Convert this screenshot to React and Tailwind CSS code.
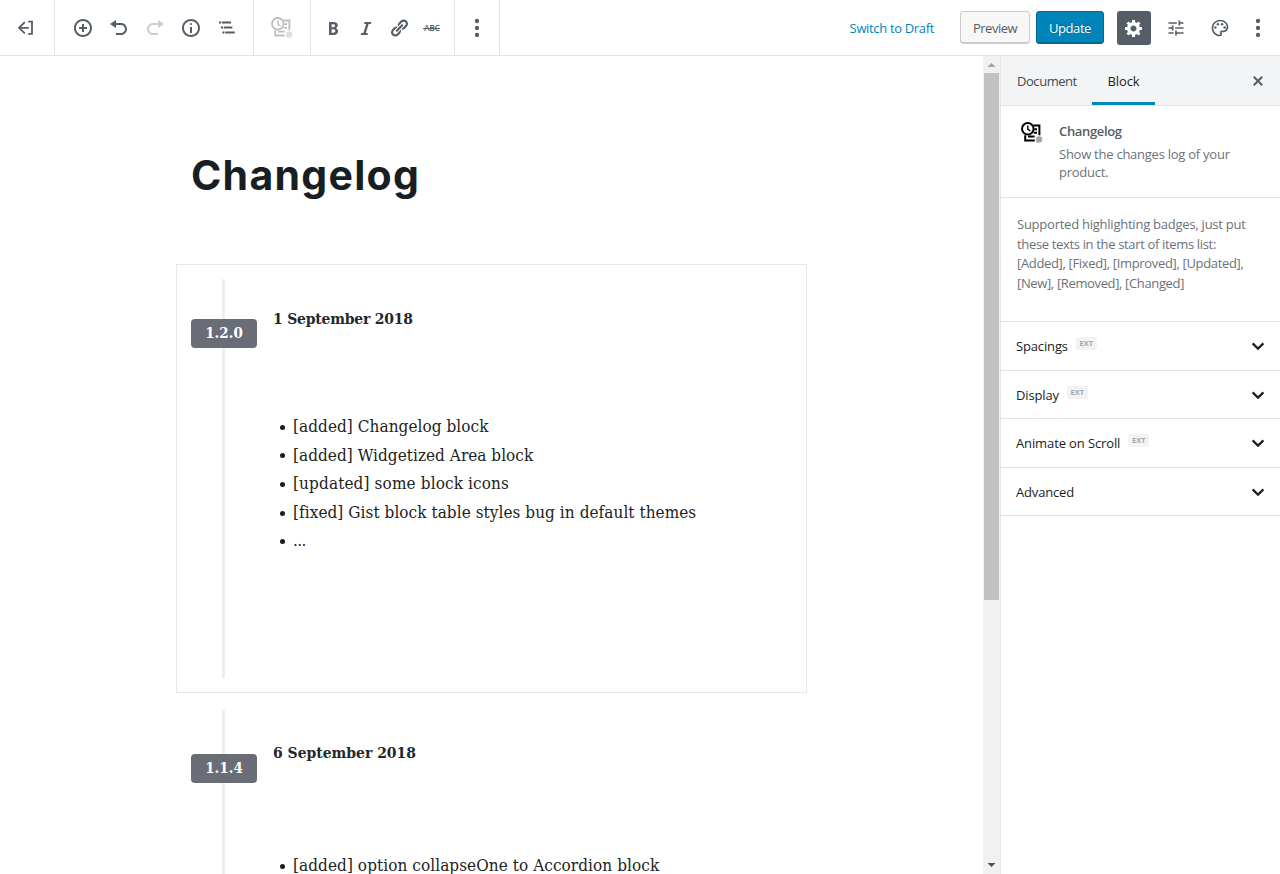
import React from "react";
import { MdOutlinePalette } from "react-icons/md";

const PATHS = {
  insert: "M10 1c-5 0-9 4-9 9s4 9 9 9 9-4 9-9-4-9-9-9zm0 16c-3.9 0-7-3.1-7-7s3.1-7 7-7 7 3.1 7 7-3.1 7-7 7zm1-11H9v3H6v2h3v3h2v-3h3V9h-3V6z",
  undo: "M12 5H7V2L1 6l6 4V7h5c2.2 0 4 1.8 4 4s-1.8 4-4 4H7v2h5c3.3 0 6-2.7 6-6s-2.7-6-6-6z",
  redo: "M8 5h5V2l6 4-6 4V7H8c-2.2 0-4 1.8-4 4s1.8 4 4 4h5v2H8c-3.3 0-6-2.7-6-6s2.7-6 6-6z",
  info: "M9 15h2V9H9v6zm1-10c-.5 0-1 .5-1 1s.5 1 1 1 1-.5 1-1-.5-1-1-1zm0-4c-5 0-9 4-9 9s4 9 9 9 9-4 9-9-4-9-9-9zm0 16c-3.9 0-7-3.1-7-7s3.1-7 7-7 7 3.1 7 7-3.1 7-7 7z",
  outline: "M2 3.6h2v2H2zM4.8 3.6H14v2H4.8zM4 8.6h2v2H4zM6.8 8.6H15.4v2H6.8zM5.4 13.6h2v2h-2zM8.2 13.6H17.8v2H8.2z",
  bold: "M6 4v13h4.54c1.37 0 2.46-.33 3.26-1 .8-.66 1.2-1.58 1.2-2.77 0-.84-.17-1.51-.51-2.01s-.9-.85-1.67-1.03v-.09c.57-.1 1.02-.4 1.36-.9s.51-1.13.51-1.91c0-1.14-.39-1.98-1.17-2.5C12.75 4.26 11.5 4 9.78 4H6zm2.57 5.15V6.26h1.36c.73 0 1.27.11 1.61.32.34.22.51.58.51 1.07 0 .54-.16.92-.47 1.15s-.82.35-1.51.35h-1.5zm0 2.19h1.6c1.44 0 2.16.53 2.16 1.61 0 .6-.17 1.05-.51 1.34s-.86.43-1.57.43H8.57v-3.38z",
  italic: "M14.78 6h-2.13l-2.8 9h2.12l-.62 2H4.6l.62-2h2.14l2.8-9H8.03l.62-2h6.75z",
  link: "M17.74 2.76c1.68 1.69 1.68 4.41 0 6.1l-1.53 1.52c-1.12 1.12-2.7 1.47-4.14 1.09l2.62-2.61.76-.77.76-.76c.84-.84.84-2.2 0-3.04-.84-.85-2.2-.85-3.04 0l-.77.76-3.38 3.38c-.37-1.44-.02-3.02 1.1-4.14l1.52-1.53c1.69-1.68 4.42-1.68 6.1 0zM8.59 13.43l5.34-5.34c.42-.42.42-1.1 0-1.52-.44-.43-1.13-.39-1.53 0l-5.33 5.34c-.42.42-.42 1.1 0 1.52.44.43 1.13.39 1.52 0zm-.76 2.29l4.14-4.15c.38 1.44.03 3.02-1.09 4.14l-1.52 1.53c-1.69 1.68-4.41 1.68-6.1 0-1.68-1.68-1.68-4.42 0-6.1l1.53-1.52c1.12-1.12 2.7-1.47 4.14-1.1l-4.14 4.15c-.85.84-.85 2.2 0 3.05.84.84 2.2.84 3.04 0z",
  gear: "M18 12h-2.18c-.17.7-.44 1.35-.81 1.93l1.54 1.54-2.1 2.1-1.54-1.54c-.58.36-1.23.63-1.91.79V19H8v-2.18c-.68-.16-1.33-.43-1.91-.79l-1.54 1.54-2.12-2.12 1.54-1.54c-.36-.58-.63-1.23-.79-1.91H1V9.03h2.17c.16-.7.44-1.35.8-1.94L2.43 5.55l2.1-2.1 1.54 1.54c.58-.37 1.24-.64 1.93-.81V2h3v2.18c.68.16 1.33.43 1.91.79l1.54-1.54 2.12 2.12-1.54 1.54c.36.59.64 1.24.8 1.94H18V12zm-8.5 1.5c1.66 0 3-1.34 3-3s-1.34-3-3-3-3 1.34-3 3 1.34 3 3 3z",
  tune: "M3 17v2h6v-2H3zM3 5v2h10V5H3zm10 16v-2h8v-2h-8v-2h-2v6h2zM7 9v2H3v2h4v2h2V9H7zm14 4v-2H11v2h10zm-6-4h2V7h4V5h-4V3h-2v6z",
  close: "M14.95 6.46L11.41 10l3.54 3.54-1.41 1.41L10 11.42l-3.53 3.53-1.42-1.42L8.58 10 5.05 6.47l1.42-1.42L10 8.58l3.54-3.53z",
};

function Icon({ name, size = 20, box = 20, className = "" }) {
  return (
    <svg width={size} height={size} viewBox={`0 0 ${box} ${box}`} fill="currentColor" className={`shrink-0 ${className}`}>
      <path d={PATHS[name]} />
    </svg>
  );
}

function Dots() {
  return (
    <svg width="6" height="20" viewBox="0 0 6 20" fill="currentColor" className="shrink-0">
      <circle cx="3" cy="3" r="2.15" />
      <circle cx="3" cy="10" r="2.15" />
      <circle cx="3" cy="17" r="2.15" />
    </svg>
  );
}

function ExitIcon() {
  return (
    <svg width="18" height="16" viewBox="0 0 18 16" fill="none" stroke="currentColor" strokeWidth="1.8" className="shrink-0">
      <path d="M8.8 2.2 L3 7.8 L8.8 13.4 M3 7.8 H12.8 M12.2 1.6 H16 V13.8 H12.2" />
    </svg>
  );
}

function ChangelogIcon({ dot, weight = 1.8 }) {
  return (
    <svg width="22" height="22" viewBox="0 0 22 22" fill="none" stroke="currentColor" strokeWidth={weight} className="shrink-0">
      <circle cx="6.8" cy="6.8" r="5.8" />
      <path d="M6.8 3.6V7.2L9.4 9" strokeWidth="1.4" />
      <path d="M12.2 3.5H18.4V13.2M4.2 13.2V18.5H13.8M7 14.6H13.6M13.4 7.2H16M12.6 10.8H16" />
      <circle cx="18.2" cy="17.4" r="3.1" fill={dot} stroke="none" />
      <path d="M15.6 18.3L15.4 21L18.4 20Z" fill={dot} stroke="none" />
    </svg>
  );
}

function Chevron() {
  return (
    <svg width="14" height="10" viewBox="0 0 14 10" fill="none" stroke="#191e23" strokeWidth="2.2" className="shrink-0">
      <path d="M1.6 2.4 L7 7.6 L12.4 2.4" />
    </svg>
  );
}

function Panel({ title, ext, tracking, height }) {
  return (
    <div className={`flex ${height} items-center border-b border-[#e2e4e7] px-[15px]`}>
      <span className={`pt-0.5 text-[13px] font-medium text-[#191e23] ${tracking}`}>{title}</span>
      {ext && (
        <span className="mb-[5px] ml-2 flex h-[13px] w-[21px] items-center justify-center rounded-xs bg-[#f3f3f4] pt-px text-[7.5px] font-bold text-[#a4a7aa]">
          EXT
        </span>
      )}
      <span className="ml-auto"><Chevron /></span>
    </div>
  );
}

function Version({ version, date, dateClass, top, gap, items }) {
  return (
    <div className="flex h-full">
      <div className="relative w-[65px] shrink-0">
        <div className="mx-auto h-full w-[3px] bg-[#eeeeee]" />
        <div className={`absolute left-0 ${top} flex h-[29px] w-[66px] items-center justify-center rounded-[4px] bg-[#6a6d75] text-[15px] font-bold text-white`}>
          {version}
        </div>
      </div>
      <div className="flex flex-col pl-[17px]">
        <div className={`text-[15.5px] font-bold leading-[24px] text-[#23282d] ${dateClass}`}>{date}</div>
        <ul className={`text-[17px] leading-[28.6px] text-[#222] ${gap}`}>
          {items.map(([text, tracking]) => (
            <li key={text} className="flex items-center whitespace-nowrap pl-[7px]">
              <span className="mr-2 mt-0.5 h-[5px] w-[5px] rounded-full bg-[#191e23]" />
              <span className={tracking}>{text}</span>
            </li>
          ))}
        </ul>
      </div>
    </div>
  );
}

export default function App() {
  return (
    <div className="flex h-[874px] w-[1280px] flex-col overflow-hidden bg-white font-['Open_Sans',sans-serif] text-[#555d66]">
      <header className="flex h-14 shrink-0 border-b border-[#e2e4e7]">
        <div className="flex w-[55px] items-center border-r border-[#e2e4e7] pl-4"><ExitIcon /></div>
        <div className="flex w-[199px] items-center gap-4 border-r border-[#e2e4e7] pl-[18px]">
          <Icon name="insert" />
          <Icon name="undo" />
          <Icon name="redo" className="text-[#ccced1]" />
          <Icon name="info" />
          <Icon name="outline" />
        </div>
        <div className="flex w-[57px] items-center border-r border-[#e2e4e7] pl-[17px] text-[#bbbdc0]">
          <ChangelogIcon dot="#dddddf" />
        </div>
        <div className="flex w-[144px] items-center border-r border-[#e2e4e7] pl-3">
          <Icon name="bold" />
          <Icon name="italic" className="ml-[13px]" />
          <Icon name="link" className="ml-[13px]" />
          <span className="relative ml-[15px] mt-px text-[8.5px] font-semibold leading-none tracking-[-0.3px]">
            ABC
            <span className="absolute -left-px top-[4px] h-px w-[17px] bg-[#555d66]" />
          </span>
        </div>
        <div className="flex w-[45px] items-center justify-center border-r border-[#e2e4e7]"><Dots /></div>
        <div className="ml-auto flex items-center pr-[19px] text-[13px]">
          <span className="pt-0.5 tracking-[-0.34px] text-[#0085ba]">Switch to Draft</span>
          <button className="ml-[26px] h-[33px] w-[70px] rounded-[3px] border border-[#cccccc] bg-[#f7f7f7] pt-0.5 tracking-[-0.5px] text-[#555d66] shadow-[inset_0_-1px_0_#cccccc]">
            Preview
          </button>
          <button className="ml-1.5 h-[33px] w-[68px] rounded-[3px] border border-[#006a95] bg-[#0085ba] pt-0.5 tracking-[-0.45px] text-white shadow-[inset_0_-1px_0_#006a95] [text-shadow:0_-1px_1px_#005d82]">
            Update
          </button>
          <span className="ml-[13px] flex h-[34px] w-[34px] items-center justify-center rounded-[3px] bg-[#555d66] text-white">
            <Icon name="gear" />
          </span>
          <Icon name="tune" box={24} className="ml-[15px]" />
          <MdOutlinePalette size={20} className="ml-6" />
          <span className="ml-[25px]"><Dots /></span>
        </div>
      </header>

      <div className="flex min-h-0 flex-1">
        <main className="w-[983px] shrink-0 overflow-hidden font-['DejaVu_Serif_Condensed','DejaVu_Serif',serif]">
          <h1 className="ml-[191px] mt-[89px] font-['Inter',sans-serif] text-[41px] font-bold leading-[60px] tracking-[1.28px] text-[#191e23]">
            Changelog
          </h1>
          <section className="ml-[176px] mt-[59px] h-[429px] w-[631px] border border-[#e6e7e9] p-3.5">
            <Version
              version="1.2.0"
              date="1 September 2018"
              dateClass="mt-[28px] tracking-[-0.2px]"
              top="top-10"
              gap="mt-[81px]"
              items={[
                ["[added] Changelog block", "tracking-[0.06px]"],
                ["[added] Widgetized Area block", "tracking-[0.04px]"],
                ["[updated] some block icons", "tracking-[0.13px]"],
                ["[fixed] Gist block table styles bug in default themes", "tracking-[0.06px]"],
                ["...", "tracking-[-0.6px]"],
              ]}
            />
          </section>
          <section className="ml-[191px] mt-[17px] h-[400px]">
            <Version
              version="1.1.4"
              date="6 September 2018"
              dateClass="mt-[31px]"
              top="top-11"
              gap="mt-[86px]"
              items={[["[added] option collapseOne to Accordion block", "tracking-[0.07px]"]]}
            />
          </section>
        </main>

        <div className="flex w-[17px] shrink-0 flex-col items-center bg-[#f1f1f1]">
          <svg width="17" height="17" viewBox="0 0 17 17" className="shrink-0"><path d="M4.5 11 L8.5 7 L12.5 11Z" fill="#a3a3a3" /></svg>
          <div className="h-[527px] w-[15px] bg-[#c1c1c1]" />
          <svg width="17" height="17" viewBox="0 0 17 17" className="mt-auto shrink-0"><path d="M4.5 6 L8.5 10 L12.5 6Z" fill="#505050" /></svg>
        </div>

        <aside className="flex flex-1 flex-col border-l border-[#e2e4e7]">
          <div className="flex h-[50px] shrink-0 border-b border-[#e2e4e7] bg-[#f3f4f5] pr-3 text-[13px] text-[#191e23]">
            <div className="flex w-[91px] items-center pl-4 pt-0.5 tracking-[-0.45px] text-[#444b52]">Document</div>
            <div className="flex w-[63px] items-center justify-center border-b-3 border-[#0085ba] pt-[5px] font-medium tracking-[-0.1px]">Block</div>
            <Icon name="close" className="ml-auto mt-[15px] text-[#555d66]" />
          </div>
          <div className="flex h-[92px] shrink-0 border-b border-[#e2e4e7] pl-5 pt-4">
            <span className="text-black"><ChangelogIcon dot="#a3a5aa" weight={2} /></span>
            <div className="-mt-px ml-4 text-[13px]">
              <div className="leading-5 font-semibold tracking-[-0.34px]">Changelog</div>
              <div className="mt-1 leading-[18px] text-[#6c7278]">
                <div className="tracking-[-0.25px]">Show the changes log of your</div>
                <div className="tracking-[-0.25px]">product.</div>
              </div>
            </div>
          </div>
          <div className="h-[124px] shrink-0 whitespace-nowrap border-b border-[#e2e4e7] pl-4 pt-[17px] text-[13px] leading-[19.5px] text-[#6c7278]">
            <div className="tracking-[-0.24px]">Supported highlighting badges, just put</div>
            <div className="tracking-[-0.34px]">these texts in the start of items list:</div>
            <div className="tracking-[-0.34px]">[Added], [Fixed], [Improved], [Updated],</div>
            <div className="tracking-[-0.36px]">[New], [Removed], [Changed]</div>
          </div>
          <Panel title="Spacings" ext tracking="tracking-[-0.15px]" height="h-[49px]" />
          <Panel title="Display" ext tracking="tracking-[-0.15px]" height="h-12" />
          <Panel title="Animate on Scroll" ext tracking="tracking-[-0.12px]" height="h-[49px]" />
          <Panel title="Advanced" tracking="tracking-[-0.17px]" height="h-12" />
        </aside>
      </div>
    </div>
  );
}
